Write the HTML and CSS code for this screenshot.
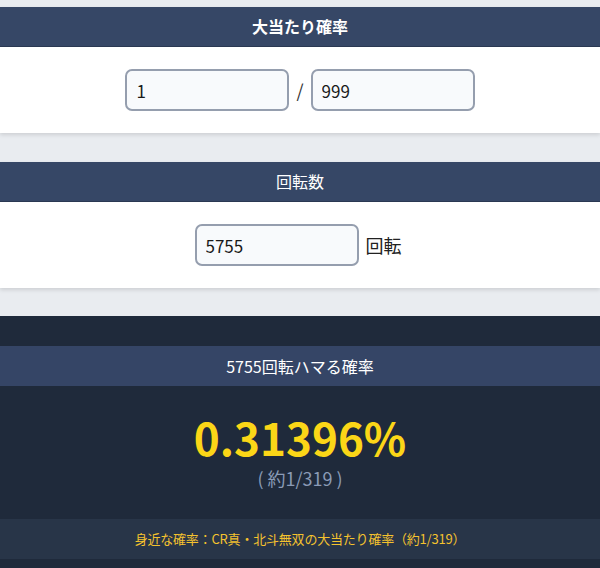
FILE: index.html
```html
<!DOCTYPE html>
<html lang="ja">
  <head>
    <meta charset="utf-8">
    <title>ハマり確率計算</title>
    <link rel="stylesheet" href="styles.css">
  </head>
  <body>
    <div class="page">
      <section class="card">
        <h2 class="card-head bold">大当たり確率</h2>
        <div class="card-body">
          <input type="text" class="num-input" id="prob-num" value="1">
          <span class="slash">/</span>
          <input type="text" class="num-input" id="prob-den" value="999">
        </div>
      </section>
      <section class="card card-last">
        <h2 class="card-head">回転数</h2>
        <div class="card-body">
          <input type="text" class="num-input" id="spins" value="5755">
          <span class="unit">回転</span>
        </div>
      </section>
      <section class="result">
        <h2 class="result-head">5755回転ハマる確率</h2>
        <div class="result-body">
          <div class="result-value">0.31396%</div>
          <div class="result-ratio">( 約1/319 )</div>
        </div>
        <div class="result-note">身近な確率：CR真・北斗無双の大当たり確率（約1/319）</div>
      </section>
    </div>
  </body>
</html>
```
FILE: styles.css
```css
body {
  margin: 0;
  background: #e9ecf0;
  font-family: "Noto Sans CJK JP", "Noto Sans", sans-serif;
  color: #222;
}
.page {
  padding-top: 7px;
}
.card {
  background: #fff;
  box-shadow: 0 2px 4px rgba(0, 0, 0, 0.12);
  margin-bottom: 29px;
}
.card-last {
  margin-bottom: 28px;
}
.card-head {
  margin: 0;
  height: 39px;
  line-height: 39px;
  background: #364766;
  border-bottom: 1px solid #2a3852;
  color: #fff;
  font-size: 16px;
  font-weight: normal;
  text-align: center;
}
.card-head.bold {
  font-weight: bold;
}
.card-body {
  display: flex;
  justify-content: center;
  align-items: center;
  padding: 22px 0;
}
.num-input {
  box-sizing: border-box;
  width: 164px;
  height: 42px;
  padding: 0 9px;
  border: 2px solid #959eae;
  border-radius: 7px;
  background: #f8fafc;
  font-family: inherit;
  font-size: 17px;
  color: #1a1a1a;
}
.slash {
  margin: 0 7px;
  font-size: 18px;
  color: #333;
}
.unit {
  margin-left: 7px;
  margin-right: 4px;
  font-size: 18px;
  color: #222;
}
.result {
  background: #1f2a3b;
  padding-top: 30px;
  padding-bottom: 9px;
}
.result-head {
  margin: 0;
  height: 40px;
  line-height: 40px;
  background: #354566;
  color: #fff;
  font-size: 16px;
  font-weight: normal;
  text-align: center;
}
.result-body {
  height: 133px;
  box-sizing: border-box;
  padding-top: 26px;
  text-align: center;
}
.result-value {
  font-size: 44px;
  font-weight: bold;
  line-height: 50px;
  color: #fbd617;
}
.result-ratio {
  margin-top: 4px;
  font-size: 18px;
  line-height: 24px;
  color: #8a9bb6;
}
.result-note {
  height: 40px;
  line-height: 40px;
  background: #283548;
  color: #f4c22e;
  font-size: 13px;
  letter-spacing: -0.2px;
  text-align: center;
}
```
